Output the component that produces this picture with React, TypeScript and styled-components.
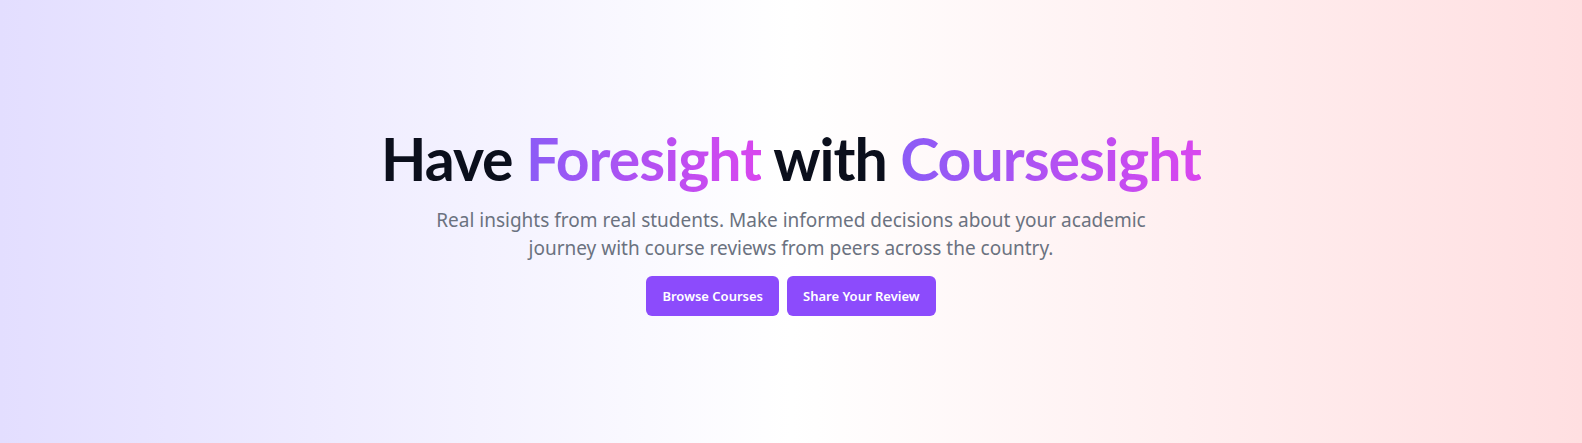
import React from "react";
import styled, { createGlobalStyle } from "styled-components";

const GlobalStyle = createGlobalStyle`
  html, body { margin: 0; padding: 0; }
  body { font-family: "Noto Sans", "Open Sans", sans-serif; }
  * { box-sizing: border-box; }
`;

const Hero = styled.section`
  min-height: 100vh;
  height: 443px;
  display: flex;
  flex-direction: column;
  align-items: center;
  justify-content: center;
  background: linear-gradient(to right, #e3deff 0%, #ffffff 50%, #ffdfe1 100%);
  text-align: center;
`;

const Title = styled.h1`
  margin: 0;
  font-family: Lato, "Noto Sans", sans-serif;
  font-size: 59px;
  line-height: 62px;
  font-weight: 700;
  color: #0b0f1c;
  letter-spacing: -1px;
`;

const Gradient = styled.span`
  background: linear-gradient(to right, #8b5cf6, #d946ef);
  -webkit-background-clip: text;
  background-clip: text;
  color: transparent;
`;

const Subtitle = styled.p`
  margin: 16px 0 0;
  max-width: 720px;
  font-size: 19px;
  line-height: 28px;
  color: #6b7280;
`;

const Actions = styled.div`
  display: flex;
  gap: 8px;
  margin-top: 14px;
`;

const Button = styled.button`
  height: 40px;
  padding: 0 16px;
  border: none;
  border-radius: 6px;
  background: #8c4bfc;
  color: #ffffff;
  font-family: inherit;
  font-size: 13px;
  font-weight: 600;
  cursor: pointer;
`;

export default function App() {
  return (
    <>
      <GlobalStyle />
      <Hero>
        <Title>
          Have <Gradient>Foresight</Gradient> with <Gradient>Coursesight</Gradient>
        </Title>
        <Subtitle>
          Real insights from real students. Make informed decisions about your academic
          journey with course reviews from peers across the country.
        </Subtitle>
        <Actions>
          <Button>Browse Courses</Button>
          <Button>Share Your Review</Button>
        </Actions>
      </Hero>
    </>
  );
}
